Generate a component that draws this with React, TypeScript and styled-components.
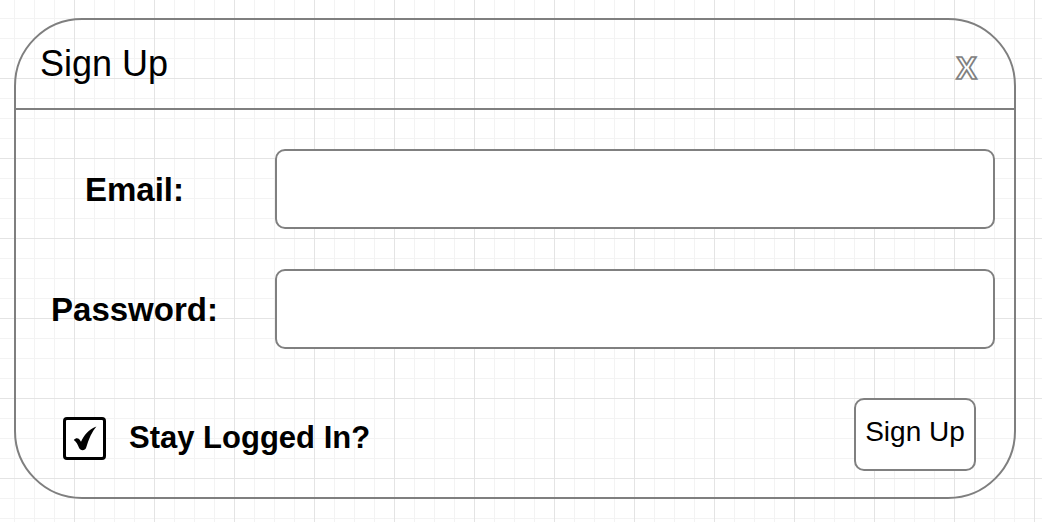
import React from "react";
import styled, { createGlobalStyle } from "styled-components";

const GlobalStyle = createGlobalStyle`
  html, body {
    margin: 0;
    padding: 0;
  }
  body {
    min-height: 100vh;
    font-family: "Liberation Sans", Arial, sans-serif;
    color: #000;
    background-color: #ffffff;
    background-image:
      linear-gradient(#e4e4e4 1px, transparent 1px),
      linear-gradient(90deg, #e4e4e4 1px, transparent 1px),
      linear-gradient(#f3f3f3 1px, transparent 1px),
      linear-gradient(90deg, #f3f3f3 1px, transparent 1px);
    background-size: 80px 80px, 80px 80px, 20px 20px, 20px 20px;
    background-position: 74px 78px, 74px 78px, 14px 18px, 14px 18px;
  }
`;

const Page = styled.div`
  padding: 18px 0 0 14px;
`;

const Dialog = styled.div`
  box-sizing: border-box;
  width: 1002px;
  height: 481px;
  border: 2px solid #7f7f7f;
  border-radius: 68px;
  display: flex;
  flex-direction: column;
`;

const Header = styled.div`
  box-sizing: border-box;
  height: 90px;
  border-bottom: 2px solid #7f7f7f;
  display: flex;
  justify-content: space-between;
  align-items: flex-start;
  padding: 0 37px 0 24px;
`;

const Title = styled.div`
  margin-top: 23px;
  font-size: 36px;
  line-height: normal;
`;

const Close = styled.span`
  margin-top: 31px;
  font-size: 31px;
  font-weight: bold;
  line-height: normal;
  color: transparent;
  -webkit-text-stroke: 1.7px #808080;
  cursor: pointer;
`;

const Body = styled.div`
  padding: 39px 19px 0 0;
  display: flex;
  flex-direction: column;
`;

const Form = styled.div`
  display: grid;
  grid-template-columns: 237px 720px;
  column-gap: 22px;
  row-gap: 40px;
`;

const Label = styled.label`
  font-size: 33px;
  font-weight: bold;
  text-align: center;
  align-self: center;
  margin-top: 2px;
`;

const Input = styled.input`
  box-sizing: border-box;
  width: 720px;
  height: 80px;
  border: 2px solid #808080;
  border-radius: 10px;
  background: #fff;
  outline: none;
  font-size: 24px;
  padding: 0 16px;
`;

const Footer = styled.div`
  margin-top: 49px;
  display: flex;
  justify-content: space-between;
  align-items: center;
  padding: 0 19px 0 47px;
`;

const CheckGroup = styled.div`
  display: flex;
  align-items: center;
  gap: 23px;
  margin-top: 7px;
`;

const CheckBox = styled.div`
  box-sizing: border-box;
  width: 43px;
  height: 43px;
  border: 3px solid #000;
  border-radius: 4px;
  background: #fff;
  display: flex;
  align-items: center;
  justify-content: center;
  padding-top: 1px;
`;

const CheckText = styled.span`
  font-size: 31px;
  font-weight: bold;
`;

const Button = styled.button`
  box-sizing: border-box;
  width: 122px;
  height: 73px;
  border: 2px solid #808080;
  border-radius: 10px;
  background: #fff;
  font-family: "Liberation Sans", Arial, sans-serif;
  font-size: 28px;
  color: #000;
  padding: 0 0 6px 0;
  cursor: pointer;
`;

const CheckMark = () => (
  <svg width="24" height="25" viewBox="0 0 24 25" aria-hidden="true">
    <path
      d="M0.8 14 C2.8 11.6 5.6 11.6 7.2 14.4 L8 15.8 C10.8 9.4 15.4 3.4 23.4 0.4 C19 5.6 15.6 13 13.2 21.6 C12.2 25 7.2 25 6 21.8 C4.8 18.6 3.2 15.6 0.8 14 Z"
      fill="#000"
    />
  </svg>
);

export default function App() {
  return (
    <>
      <GlobalStyle />
      <Page>
        <Dialog>
          <Header>
            <Title>Sign Up</Title>
            <Close>X</Close>
          </Header>
          <Body>
            <Form>
              <Label>Email:</Label>
              <Input type="text" />
              <Label>Password:</Label>
              <Input type="password" />
            </Form>
            <Footer>
              <CheckGroup>
                <CheckBox>
                  <CheckMark />
                </CheckBox>
                <CheckText>Stay Logged In?</CheckText>
              </CheckGroup>
              <Button>Sign Up</Button>
            </Footer>
          </Body>
        </Dialog>
      </Page>
    </>
  );
}
